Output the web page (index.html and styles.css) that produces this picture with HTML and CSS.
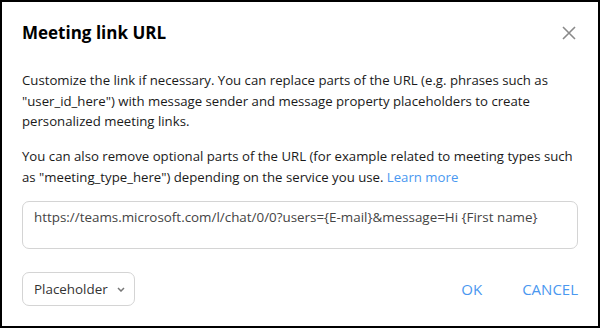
FILE: index.html
```html
<!DOCTYPE html>
<html>
<head>
<meta charset="utf-8">
<link rel="stylesheet" href="styles.css">
</head>
<body>
<div class="dialog">
  <div class="header">
    <h1 class="title">Meeting link URL</h1>
    <button class="close" aria-label="Close">
      <svg width="14" height="14" viewBox="0 0 14 14"><path d="M1 1L13 13M13 1L1 13" stroke="#8a8a8a" stroke-width="1.6" fill="none"/></svg>
    </button>
  </div>
  <p class="text">Customize the link if necessary. You can replace parts of the URL (e.g. phrases such as "user_id_here") with message sender and message property placeholders to create personalized meeting links.</p>
  <p class="text">You can also remove optional parts of the URL (for example related to meeting types such as "meeting_type_here") depending on the service you use. <a class="link" href="#">Learn more</a></p>
  <div class="url">https://teams.microsoft.com/l/chat/0/0?users={E-mail}&amp;message=Hi {First name}</div>
  <div class="footer">
    <div class="select">
      <span>Placeholder</span>
      <svg width="8" height="5" viewBox="0 0 8 5"><path d="M1 1L4 4L7 1" stroke="#777" stroke-width="1.5" fill="none"/></svg>
    </div>
    <div class="actions">
      <a class="btn" href="#">OK</a>
      <a class="btn" href="#">CANCEL</a>
    </div>
  </div>
</div>
</body>
</html>
```
FILE: styles.css
```css
* { box-sizing: border-box; }
html, body { margin: 0; padding: 0; }
body {
  width: 600px;
  height: 328px;
  background: #fff;
  font-family: "Open Sans", "Noto Sans", sans-serif;
  color: #1a1a1a;
}
.dialog {
  width: 600px;
  height: 328px;
  border: 2px solid #000;
  padding: 0 20px 0 20px;
  display: flex;
  flex-direction: column;
}
.header {
  display: flex;
  justify-content: space-between;
  align-items: center;
  height: 61px;
}
.title {
  margin: 0;
  font-size: 17px;
  font-weight: 700;
  color: #000;
}
.close {
  border: 0;
  background: none;
  padding: 0;
  margin-right: 2px;
  width: 14px;
  height: 14px;
  display: flex;
}
.text {
  margin: 0;
  font-size: 13.2px;
  line-height: 20.5px;
}
.text + .text { margin-top: 14.5px; }
.header + .text { margin-top: 7px; }
.link { color: #4a98f0; text-decoration: none; }
.url {
  margin-top: 14px;
  height: 48px;
  border: 1px solid #d4d4d4;
  border-radius: 7px;
  padding: 5px 11px;
  font-size: 13.4px;
  line-height: 20px;
  color: #444;
}
.footer {
  margin-top: 23px;
  display: flex;
  justify-content: space-between;
  align-items: center;
}
.select {
  width: 113px;
  height: 34px;
  border: 1px solid #d4d4d4;
  border-radius: 7px;
  display: flex;
  align-items: center;
  justify-content: space-between;
  padding: 0 9px 0 11px;
  font-size: 13.4px;
  color: #333;
}
.actions { display: flex; gap: 40px; padding-right: 0; }
.btn {
  color: #4a98f0;
  font-size: 15px;
  text-decoration: none;
}
```
